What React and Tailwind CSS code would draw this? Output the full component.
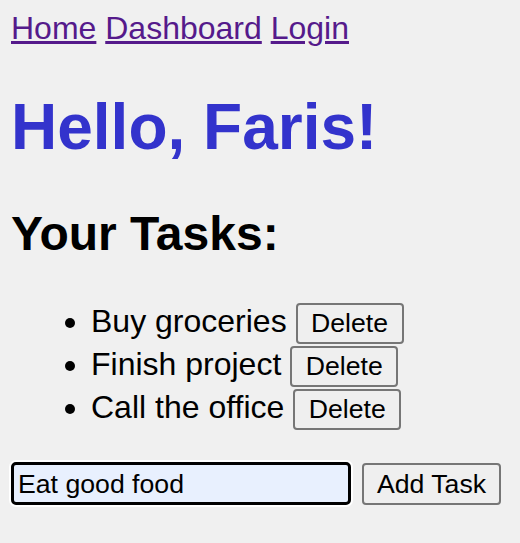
import React, { useState } from 'react';

const tasks = ['Buy groceries', 'Finish project', 'Call the office'];

function TaskButton({ children, className = '' }) {
  return (
    <button
      className={`inline-flex items-center justify-center align-top border-2 border-[#767676] rounded-[4px] bg-[#efefef] text-black text-[26.67px] leading-[normal] ${className}`}
    >
      {children}
    </button>
  );
}

export default function App() {
  const [text] = useState('Eat good food');

  return (
    <div
      className="min-h-[543px] bg-[#f0f0f0] text-black px-[11px] pt-[10px]"
      style={{ fontFamily: '"Liberation Sans", Arial, sans-serif' }}
    >
      <nav className="text-[32px] leading-[normal]">
        <a href="#" className="underline text-[#551a8b]">Home</a>{' '}
        <a href="#" className="underline text-[#551a8b]">Dashboard</a>{' '}
        <a href="#" className="underline text-[#551a8b]">Login</a>
      </nav>

      <h1 className="mt-[43px] text-[64px] font-bold leading-[normal] text-[#3333cc]">
        Hello, Faris!
      </h1>

      <h2 className="mt-[42px] text-[48px] font-bold leading-[normal]">Your Tasks:</h2>

      <ul className="mt-[39px] list-disc pl-[80px] text-[32px]">
        {tasks.map((t) => (
          <li key={t} className="h-[43px] leading-[43px]">
            {t}{' '}
            <TaskButton className="mt-[3px] h-[41px] w-[108px]">Delete</TaskButton>
          </li>
        ))}
      </ul>

      <form className="mt-[33px] flex items-start" onSubmit={(e) => e.preventDefault()}>
        <input
          value={text}
          readOnly
          className="w-[340px] h-[43px] border-[3px] border-black rounded-[5px] bg-[#e8f0fe] pl-[4px] pt-[2px] text-[26.67px] text-black outline-none shadow-[0_0_0_2px_#ffffff]"
        />
        <TaskButton className="ml-[11px] mt-[1px] h-[42px] w-[139px]">Add Task</TaskButton>
      </form>
    </div>
  );
}
